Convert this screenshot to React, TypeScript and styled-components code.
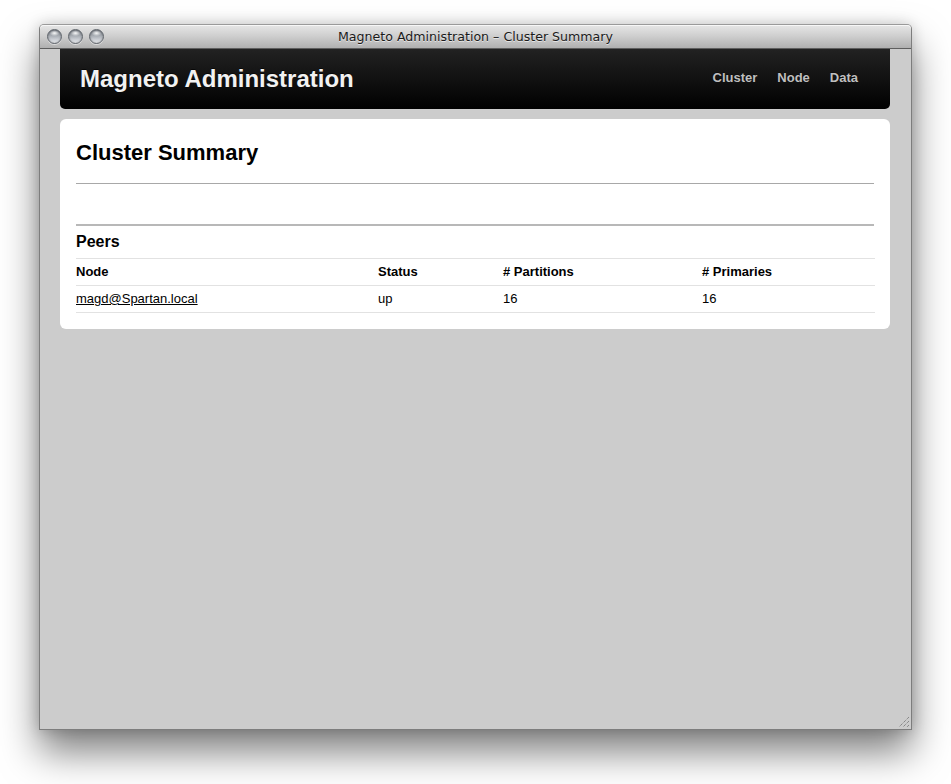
import React from "react";
import styled, { createGlobalStyle } from "styled-components";

const GlobalStyle = createGlobalStyle`
  html, body {
    margin: 0;
    padding: 0;
    background: #ffffff;
  }
  body {
    font-family: "Liberation Sans", Arial, Helvetica, sans-serif;
  }
  * { box-sizing: border-box; }
`;

const Desktop = styled.div`
  padding: 24px 0 0 39px;
  height: 784px;
  overflow: hidden;
`;

const Window = styled.div`
  position: relative;
  width: 873px;
  height: 706px;
  display: flex;
  flex-direction: column;
  border: 1px solid #7d7d7d;
  border-top-color: #9a9a9a;
  border-radius: 5px 5px 0 0;
  background: #cccccc;
  box-shadow: 0 22px 38px rgba(0, 0, 0, 0.5), 0 0 14px rgba(0, 0, 0, 0.18);
`;

const TitleBar = styled.div`
  height: 24px;
  flex: none;
  display: grid;
  grid-template-columns: 1fr auto 1fr;
  align-items: center;
  background: linear-gradient(#e6e6e6 0%, #d0d0d0 45%, #b0b0b0 100%);
  border-bottom: 1px solid #5e5e5e;
  border-radius: 4px 4px 0 0;
  box-shadow: inset 0 1px 0 rgba(255, 255, 255, 0.7);
`;

const Lights = styled.div`
  display: flex;
  gap: 6px;
  padding-left: 7px;
`;

const Light = styled.span`
  width: 15px;
  height: 15px;
  border-radius: 50%;
  border: 1px solid #5f646b;
  background:
    radial-gradient(ellipse 5px 3px at 50% 24%, rgba(255,255,255,0.95) 0%, rgba(255,255,255,0) 100%),
    linear-gradient(#7d828a 0%, #a3a8af 40%, #d9dce1 85%, #eceef1 100%);
  box-shadow: 0 1px 0 rgba(255, 255, 255, 0.5), inset 0 0 2px rgba(0, 0, 0, 0.35);
`;

const WindowTitle = styled.div`
  font-family: "DejaVu Sans", "Liberation Sans", sans-serif;
  font-size: 12.6px;
  line-height: 14px;
  color: #1a1a1a;
  text-shadow: 0 1px 0 rgba(255, 255, 255, 0.6);
  white-space: nowrap;
  margin-top: 1px;
`;

const Content = styled.div`
  flex: 1;
  padding: 0 21px 0 20px;
  background: #cccccc;
`;

const NavBar = styled.header`
  height: 60px;
  display: flex;
  align-items: center;
  justify-content: space-between;
  padding: 0 22px 0 20px;
  background: linear-gradient(#222222, #000000);
  border-radius: 0 0 5px 5px;
`;

const Brand = styled.a`
  font-size: 24px;
  line-height: 24px;
  font-weight: bold;
  color: #f2f2f2;
  text-decoration: none;
  text-shadow: 0 -1px 0 rgba(0, 0, 0, 0.6);
`;

const NavList = styled.nav`
  display: flex;
  align-items: center;
  margin-top: -2px;
`;

const NavLink = styled.a`
  font-size: 13px;
  line-height: 18px;
  font-weight: bold;
  color: #bfbfbf;
  padding: 0 10px;
  text-decoration: none;
  text-shadow: 0 -1px 0 rgba(0, 0, 0, 0.3);
`;

const Card = styled.main`
  margin-top: 10px;
  background: #ffffff;
  border-radius: 6px;
  padding: 16px;
`;

const PageTitle = styled.h1`
  margin: 0;
  font-size: 22px;
  line-height: 36px;
  font-weight: bold;
  color: #000;
`;

const Rule = styled.hr<{ $thick?: boolean }>`
  margin: ${(p) => (p.$thick ? "0" : "12px 0 0")};
  border: 0;
  height: ${(p) => (p.$thick ? "2px" : "1px")};
  background: ${(p) => (p.$thick ? "#b8b8b8" : "#a8a8a8")};
`;

const EmptySection = styled.section`
  height: 40px;
`;

const SectionTitle = styled.h3`
  margin: 0;
  padding: 7px 0 7px;
  font-size: 16px;
  line-height: 18px;
  font-weight: bold;
  color: #000;
`;

const Table = styled.table`
  width: 100%;
  table-layout: fixed;
  border-collapse: collapse;
  font-size: 13px;
  line-height: 18px;
  color: #000;
  border-bottom: 1px solid #e2e2e2;
`;

const Row = styled.tr`
  border-top: 1px solid #e2e2e2;
`;

const HeadCell = styled.th`
  text-align: left;
  font-weight: bold;
  padding: 4px 0;
`;

const Cell = styled.td`
  padding: 4px 0;
`;

const NodeLink = styled.a`
  color: #000;
  text-decoration: underline;
`;

const Grip = styled.svg`
  position: absolute;
  right: 1px;
  bottom: 1px;
`;

const columns = [302, 125, 199, 173];

const peers = [{ node: "magd@Spartan.local", status: "up", partitions: 16, primaries: 16 }];

export default function App() {
  return (
    <>
      <GlobalStyle />
      <Desktop>
        <Window>
          <TitleBar>
            <Lights>
              <Light />
              <Light />
              <Light />
            </Lights>
            <WindowTitle>Magneto Administration – Cluster Summary</WindowTitle>
            <div />
          </TitleBar>
          <Content>
            <NavBar>
              <Brand href="#">Magneto Administration</Brand>
              <NavList>
                <NavLink href="#">Cluster</NavLink>
                <NavLink href="#">Node</NavLink>
                <NavLink href="#">Data</NavLink>
              </NavList>
            </NavBar>
            <Card>
              <PageTitle>Cluster Summary</PageTitle>
              <Rule />
              <EmptySection />
              <Rule $thick />
              <SectionTitle>Peers</SectionTitle>
              <Table>
                <colgroup>
                  {columns.map((w, i) => (
                    <col key={i} style={{ width: w }} />
                  ))}
                </colgroup>
                <thead>
                  <Row>
                    <HeadCell>Node</HeadCell>
                    <HeadCell>Status</HeadCell>
                    <HeadCell># Partitions</HeadCell>
                    <HeadCell># Primaries</HeadCell>
                  </Row>
                </thead>
                <tbody>
                  {peers.map((p) => (
                    <Row key={p.node}>
                      <Cell>
                        <NodeLink href="#">{p.node}</NodeLink>
                      </Cell>
                      <Cell>{p.status}</Cell>
                      <Cell>{p.partitions}</Cell>
                      <Cell>{p.primaries}</Cell>
                    </Row>
                  ))}
                </tbody>
              </Table>
            </Card>
          </Content>
          <Grip width="12" height="12" viewBox="0 0 12 12">
            <g stroke="#6a6a6a" strokeWidth="1" strokeDasharray="1 1">
              <line x1="11" y1="1" x2="1" y2="11" />
              <line x1="11" y1="5" x2="5" y2="11" />
              <line x1="11" y1="9" x2="9" y2="11" />
            </g>
          </Grip>
        </Window>
      </Desktop>
    </>
  );
}
